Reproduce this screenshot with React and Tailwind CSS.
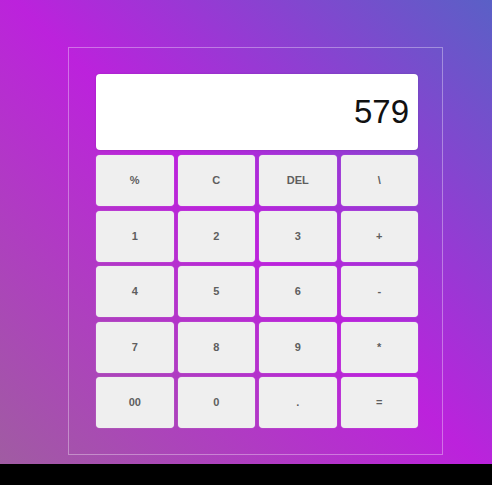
export default function App() {
  const keys = ["%", "C", "DEL", "\\", "1", "2", "3", "+", "4", "5", "6", "-", "7", "8", "9", "*", "00", "0", ".", "="];
  return (
    <div className="w-[492px] h-[485px] flex flex-col overflow-hidden" style={{ fontFamily: '"Liberation Sans", Arial, sans-serif' }}>
      <div className="h-[464px] bg-[linear-gradient(45deg,#a05ca2_0%,#bc22dc_50%,#5a60c6_100%)] pt-[47px] pl-[68px]">
        <div className="w-[375px] h-[408px] border border-[rgba(255,255,255,0.35)] pt-[26px] pl-[27px] pr-[24px]">
          <div className="h-[76px] bg-white rounded-[4px] flex items-center justify-end pr-[9px] text-[33px] text-[#111] shadow-[0_0_2px_rgba(0,0,0,0.15)]">
            579
          </div>
          <div className="mt-[5px] grid grid-cols-4 gap-x-[4px] gap-y-[4.5px]">
            {keys.map((k) => (
              <div
                key={k}
                className="h-[51px] bg-[#efefef] rounded-[4px] flex items-center justify-center text-[11px] font-bold text-[#5e5e5e] shadow-[0_0_1px_rgba(255,255,255,0.6)]"
              >
                {k}
              </div>
            ))}
          </div>
        </div>
      </div>
      <div className="flex-1 bg-black" />
    </div>
  );
}
